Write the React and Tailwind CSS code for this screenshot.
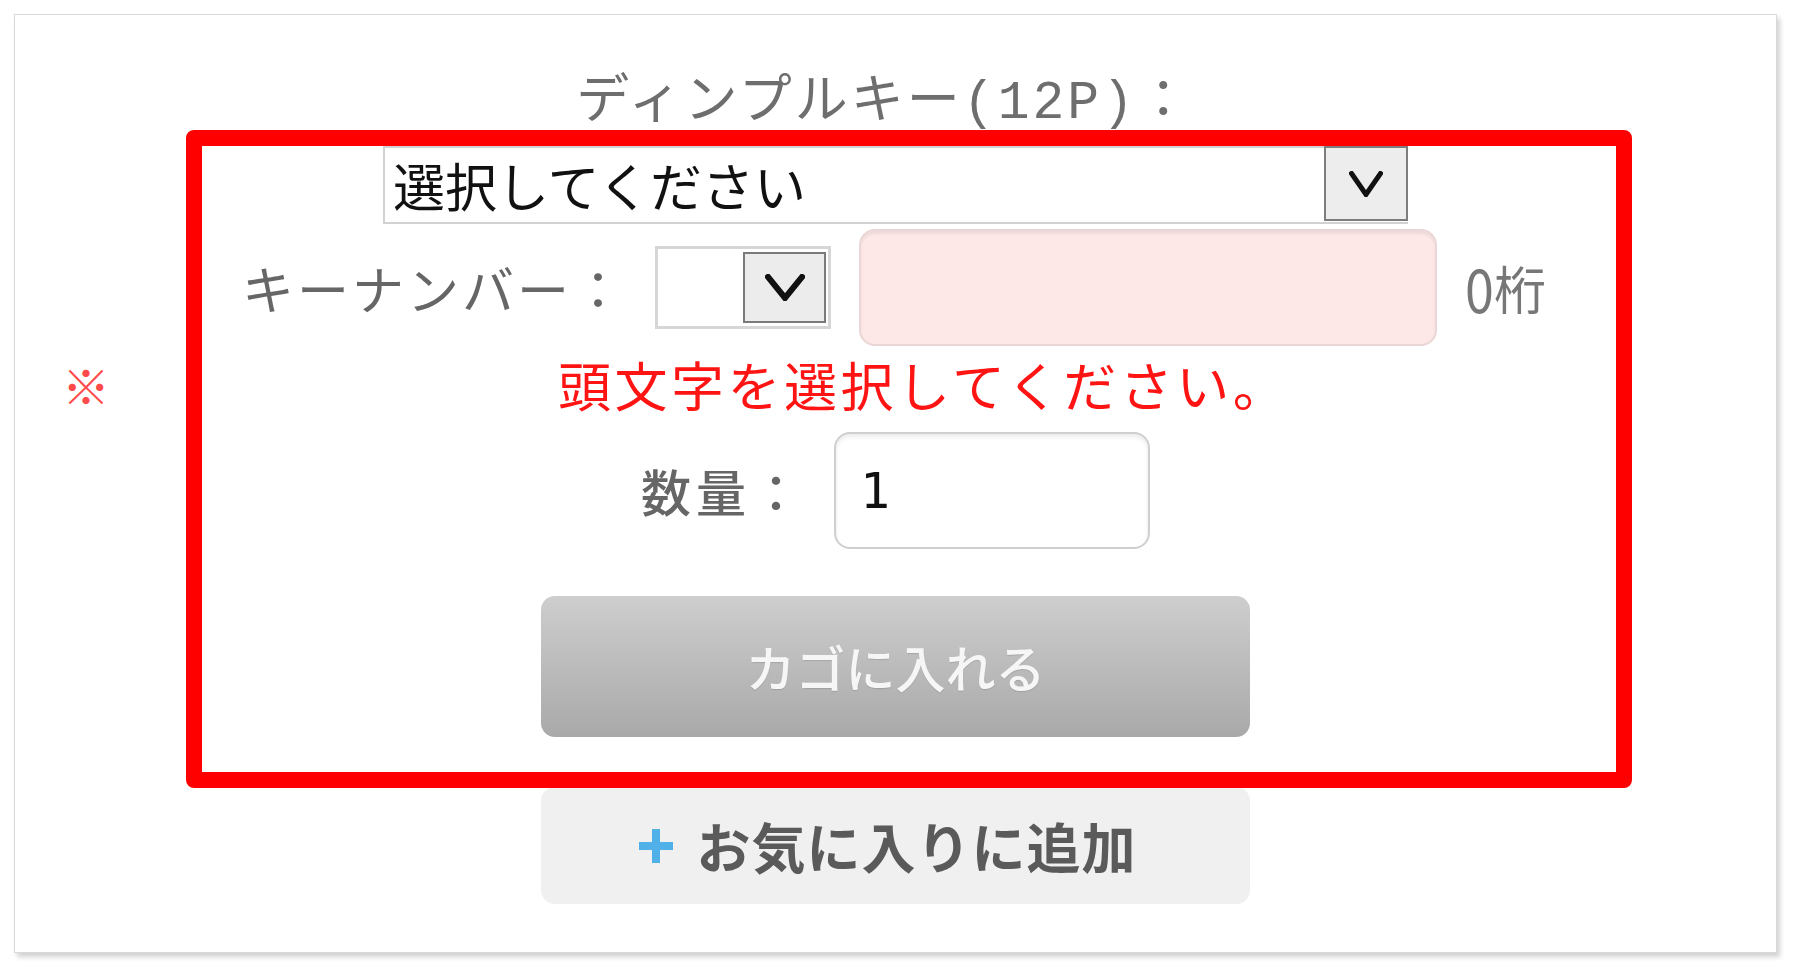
import React from 'react';

const JP = "font-['Noto_Sans_CJK_JP',sans-serif]";

const Chevron = ({ w = 34, h = 24, stroke = 5 }) => (
  <svg width={w} height={h} viewBox={`0 0 ${w} ${h}`} fill="none">
    <polyline
      points={`${stroke / 2},${stroke / 2} ${w / 2},${h - stroke / 2} ${w - stroke / 2},${stroke / 2}`}
      stroke="#111"
      strokeWidth={stroke}
      strokeLinecap="square"
      strokeLinejoin="miter"
    />
  </svg>
);

const PlusIcon = () => (
  <svg width="38" height="38" viewBox="0 0 38 38">
    <rect x="15" y="2" width="8" height="34" fill="#4fb1e8" />
    <rect x="2" y="15" width="34" height="8" fill="#4fb1e8" />
  </svg>
);

export default function App() {
  return (
    <div className={`w-[1794px] h-[972px] bg-white pt-[14px] pl-[14px] ${JP}`}>
      <div className="relative w-[1763px] h-[939px] border border-[#d9d9d9] bg-white shadow-[3px_4px_5px_rgba(0,0,0,0.18)] flex flex-col items-center">
        {/* title */}
        <div className="mt-[52px] h-[56px] pr-[22px] leading-[56px] text-[53px] tracking-[3px] text-[#6e6e6e] whitespace-nowrap">
          ディンプルキー<span className="font-['Liberation_Mono','Noto_Sans_CJK_JP',monospace]">(12P)</span>：
        </div>

        {/* key type select */}
        <div className="mt-[23px] flex w-[1025px] h-[78px] border-2 border-r-0 border-[#d2d2d2] bg-white">
          <div className="flex-1 flex items-center pl-[8px] text-[52px] leading-none text-[#111]">選択してください</div>
          <div className="w-[84px] h-[75px] -mt-[2px] flex items-center justify-center border-2 border-[#7d7d7d] bg-[#ededed]">
            <Chevron w={34} h={26} stroke={5} />
          </div>
        </div>

        {/* key number row */}
        <div className="mt-[5px] flex items-center h-[117px]">
          <div className="w-[417px] pl-[4px] text-[52px] tracking-[3px] text-[#666] whitespace-nowrap">キーナンバー：</div>
          <div className="w-[176px] h-[83px] flex items-center justify-end pr-[2px] border-[3px] border-[#d6d6d6] bg-white">
            <div className="w-[83px] h-[71px] flex items-center justify-center border-2 border-[#7a7a7a] bg-[#ececec]">
              <Chevron w={40} h={27} stroke={6} />
            </div>
          </div>
          <div className="ml-[28px] w-[578px] h-[117px] rounded-[16px] border-2 border-[#ead6d6] bg-[#fde7e7] shadow-[inset_0_3px_3px_rgba(0,0,0,0.06)]" />
          <div className="ml-[28px] w-[88px] text-[52px] text-[#777] whitespace-nowrap">
            <span className="inline-block scale-y-[1.15]">0</span>桁
          </div>
        </div>

        {/* error row */}
        <div className="mt-[10px] w-full h-[56px] flex items-center">
          <span className="ml-[47px] w-[46px] text-[48px] font-bold leading-none text-[#ff4a4a]">※</span>
          <span className="ml-[450px] text-[53px] tracking-[3.5px] leading-none text-[#ff1414] whitespace-nowrap">頭文字を選択してください。</span>
        </div>

        {/* quantity row */}
        <div className="mt-[20px] flex items-center h-[117px]">
          <div className="w-[193px] text-[50px] tracking-[5px] font-medium text-[#666] whitespace-nowrap">数量：</div>
          <div className="w-[316px] h-[117px] flex items-center pl-[24px] rounded-[16px] border-2 border-[#cfcfcf] bg-white shadow-[inset_0_3px_4px_rgba(0,0,0,0.08)]">
            <span className="font-['DejaVu_Sans_Mono',monospace] text-[50px] leading-none text-[#111]">1</span>
          </div>
        </div>

        {/* cart button */}
        <button className="mt-[47px] w-[709px] h-[141px] rounded-[14px] bg-linear-to-b from-[#cecece] to-[#a9a9a9] flex items-center justify-center text-[50px] font-medium text-[#f6f6f6] [text-shadow:0_1px_1px_rgba(0,0,0,0.12)]">
          カゴに入れる
        </button>

        {/* favourite button */}
        <button className="mt-[50px] w-[709px] h-[117px] rounded-[14px] bg-[#f0f0f0] flex items-center justify-center gap-[22px] pr-[18px]">
          <PlusIcon />
          <span className="text-[54px] font-bold tracking-[1px] text-[#5a5a5a]">お気に入りに追加</span>
        </button>

        {/* annotation box */}
        <div className="absolute left-[171px] top-[115px] w-[1446px] h-[658px] border-[16px] border-[#ff0000] rounded-[8px] pointer-events-none" />
      </div>
    </div>
  );
}
